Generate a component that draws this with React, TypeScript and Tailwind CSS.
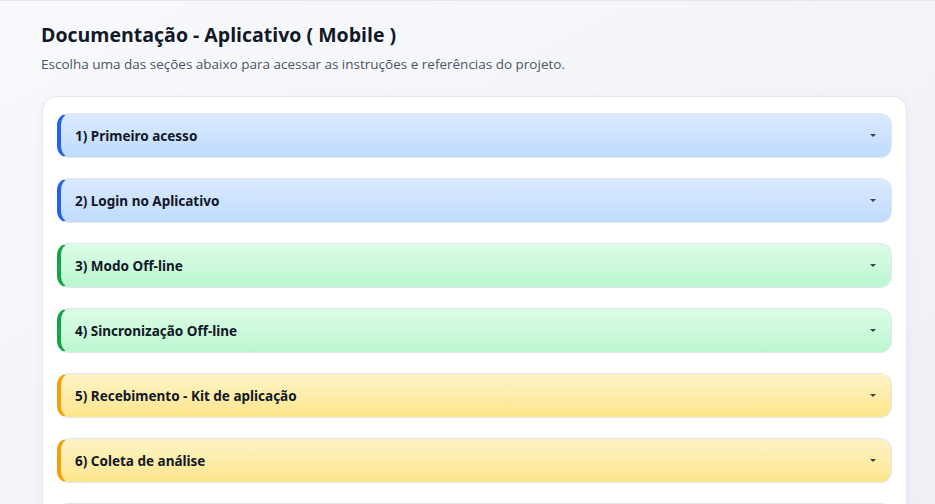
const sections = [
  { title: '1) Primeiro acesso', tone: 'blue' },
  { title: '2) Login no Aplicativo', tone: 'blue' },
  { title: '3) Modo Off-line', tone: 'green' },
  { title: '4) Sincronização Off-line', tone: 'green' },
  { title: '5) Recebimento - Kit de aplicação', tone: 'amber' },
  { title: '6) Coleta de análise', tone: 'amber' },
  { title: '7) Registro de aplicação', tone: 'amber' },
];

const toneClasses: Record<string, string> = {
  blue: 'border-l-[#2563eb] bg-gradient-to-b from-[#dbeafe] to-[#bfdbfe]',
  green: 'border-l-[#16a34a] bg-gradient-to-b from-[#dcfce7] to-[#bbf7d0]',
  amber: 'border-l-[#f59e0b] bg-gradient-to-b from-[#fef3c7] to-[#fde68a]',
};

export default function App() {
  return (
    <div
      className="min-h-screen h-[504px] overflow-hidden border-t border-[#e5e7eb] bg-gradient-to-br from-[#f8f9fc] to-[#eef0f6]"
      style={{ fontFamily: '"Open Sans", "Noto Sans", Arial, sans-serif' }}
    >
      <div className="pl-[41px] pr-[28px] pt-[19px]">
        <h1 className="text-[19.5px] font-bold text-[#111827] leading-[30px]">
          Documentação - Aplicativo ( Mobile )
        </h1>
        <p className="mt-[5px] text-[13.5px] text-[#4b5563] leading-[18px]">
          Escolha uma das seções abaixo para acessar as instruções e referências do projeto.
        </p>

        <div className="mt-[23px] ml-px rounded-[14px] border border-[#e5e7eb] bg-white px-[14px] pt-[16px] shadow-[0_4px_14px_rgba(15,23,42,0.04)]">
          <div className="flex flex-col gap-[20px]">
            {sections.map((s) => (
              <div
                key={s.title}
                className={`flex h-[45px] items-center justify-between rounded-[12px] border border-[#e2e5ea] border-l-4 pl-[14px] pr-[14px] ${toneClasses[s.tone]}`}
              >
                <span className="font-['Noto_Sans',sans-serif] text-[13.5px] font-bold text-[#111827] pt-px">
                  {s.title}
                </span>
                <span className="mr-[1px] h-0 w-0 border-l-[3px] border-r-[3px] border-t-[3px] border-l-transparent border-r-transparent border-t-[#374151]" />
              </div>
            ))}
          </div>
        </div>
      </div>
    </div>
  );
}
